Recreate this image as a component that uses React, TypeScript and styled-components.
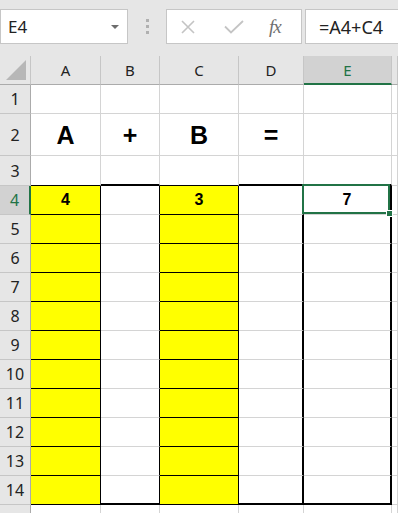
import styled, { createGlobalStyle } from 'styled-components'

const GREEN = '#217346'
const GRID = '1px solid #d4d4d4'
const THIN = '1px solid #000'
const THICK = '2px solid #000'

const GlobalStyle = createGlobalStyle`
  *, *::before, *::after { box-sizing: border-box; }
  html, body { margin: 0; padding: 0; }
  body {
    background: #e6e6e6;
    font-family: "Noto Sans", "Open Sans", sans-serif;
    overflow: hidden;
    width: 398px;
    height: 513px;
  }
`

const columns = ['A', 'B', 'C', 'D', 'E', 'F']
// the last row (15) only peeks in under row 14
const rowHeights = [29, 42, 30, 29, 29, 29, 29, 29, 29, 29, 29, 29, 29, 29, 29]

const bigText: Record<string, string> = { '2A': 'A', '2B': '+', '2C': 'B', '2D': '=' }
const values: Record<string, string> = { '4A': '4', '4C': '3', '4E': '7' }

type CellSpec = { bg: string; right: string; bottom: string }

function cellSpec(row: number, col: string): CellSpec {
  const inBlock = row >= 4 && row <= 14
  const yellow = inBlock && (col === 'A' || col === 'C')
  let right = GRID
  let bottom = GRID
  if (inBlock) {
    if (col === 'A' || col === 'B' || col === 'C') right = THIN
    if (col === 'D' || col === 'E') right = THICK
    if (col === 'A' || col === 'C') bottom = THIN
    if (row === 14 && (col === 'B' || col === 'D' || col === 'E')) bottom = THICK
  }
  if (row === 3) {
    if (col === 'A' || col === 'C') bottom = THIN
    if (col === 'B' || col === 'D' || col === 'E') bottom = THICK
  }
  return { bg: yellow ? '#ffff00' : '#ffffff', right, bottom }
}

function App() {
  return (
    <Page>
      <GlobalStyle />
      <FormulaBar>
        <NameBox>
          <NameText>E4</NameText>
          <DropArrow />
        </NameBox>
        <Grip>
          <span />
          <span />
          <span />
        </Grip>
        <FxBox>
          <svg width="14" height="14" viewBox="0 0 14 14">
            <path d="M1 1 L13 13 M13 1 L1 13" stroke="#c4c4c4" strokeWidth="1.6" fill="none" />
          </svg>
          <svg width="20" height="14" viewBox="0 0 20 14">
            <path d="M1 6.5 L7 12.5 L19 1" stroke="#c4c4c4" strokeWidth="1.8" fill="none" />
          </svg>
          <FxLabel>fx</FxLabel>
        </FxBox>
        <FormulaInput>=A4+C4</FormulaInput>
      </FormulaBar>

      <Sheet>
        <Corner>
          <svg width="21" height="21" viewBox="0 0 21 21">
            <polygon points="0,20 20,0 20,20" fill="#b7b7b7" />
          </svg>
        </Corner>
        {columns.map((c) => (
          <ColHeader key={c} $active={c === 'E'}>
            {c !== 'F' && c}
          </ColHeader>
        ))}
        {rowHeights.map((_, i) => {
          const row = i + 1
          return [
            <RowHeader key={`h${row}`} $active={row === 4}>
              {row < 15 && row}
            </RowHeader>,
            ...columns.map((c) => {
              const spec = cellSpec(row, c)
              const key = `${row}${c}`
              return (
                <Cell key={key} $bg={spec.bg} $right={spec.right} $bottom={spec.bottom}>
                  {bigText[key] && <BigText>{bigText[key]}</BigText>}
                  {values[key] && <ValueText>{values[key]}</ValueText>}
                  {key === '4E' && (
                    <Selection>
                      <FillHandle />
                    </Selection>
                  )}
                </Cell>
              )
            }),
          ]
        })}
      </Sheet>
    </Page>
  )
}

export default App

const Page = styled.div`
  width: 398px;
  height: 513px;
  overflow: hidden;
  display: flex;
  flex-direction: column;
  background: #e6e6e6;
`

const FormulaBar = styled.div`
  height: 56px;
  flex: none;
  display: flex;
  align-items: flex-start;
  padding-top: 9px;
`

const NameBox = styled.div`
  width: 128px;
  height: 35px;
  background: #fff;
  border: 1px solid #c6c6c6;
  display: flex;
  align-items: center;
  justify-content: space-between;
  padding: 0 8px 0 7px;
`

const NameText = styled.span`
  font-size: 17px;
  color: #222;
`

const DropArrow = styled.span`
  width: 0;
  height: 0;
  border-left: 4px solid transparent;
  border-right: 4px solid transparent;
  border-top: 4px solid #6d6d6d;
`

const Grip = styled.div`
  width: 38px;
  height: 35px;
  display: flex;
  flex-direction: column;
  align-items: center;
  justify-content: center;
  gap: 3px;

  span {
    width: 3px;
    height: 3px;
    background: #b0b0b0;
  }
`

const FxBox = styled.div`
  width: 136px;
  height: 35px;
  background: #fff;
  border: 1px solid #c6c6c6;
  display: flex;
  align-items: center;
  padding-left: 14px;

  svg:first-child {
    margin-right: 29px;
  }
  svg:nth-child(2) {
    margin-right: 25px;
  }
`

const FxLabel = styled.span`
  font-family: "Liberation Serif", serif;
  font-style: italic;
  font-size: 19px;
  color: #707070;
  letter-spacing: -1px;
`

const FormulaInput = styled.div`
  flex: 1;
  height: 35px;
  margin-left: 3px;
  background: #fff;
  border: 1px solid #c6c6c6;
  border-right: none;
  display: flex;
  align-items: center;
  padding-left: 13px;
  font-size: 18px;
  color: #222;
`

const Sheet = styled.div`
  flex: 1;
  display: grid;
  grid-template-columns: 31px 70px 59px 79px 65px 88px 1fr;
  grid-template-rows: 29px ${rowHeights.map((h) => `${h}px`).join(' ')};
  background: #fff;
`

const Corner = styled.div`
  background: #e6e6e6;
  border-right: 1px solid #c6c6c6;
  border-bottom: 1px solid #ababab;
  display: flex;
  align-items: flex-end;
  justify-content: flex-end;
  padding: 0 3px 3px 0;
`

const ColHeader = styled.div<{ $active: boolean }>`
  background: ${({ $active }) => ($active ? '#d2d2d2' : '#e6e6e6')};
  border-right: 1px solid #c6c6c6;
  border-bottom: ${({ $active }) => ($active ? `2px solid ${GREEN}` : '1px solid #ababab')};
  color: ${({ $active }) => ($active ? GREEN : '#222')};
  font-size: 15px;
  display: flex;
  align-items: center;
  justify-content: center;
  padding-top: ${({ $active }) => ($active ? '1px' : '0')};
`

const RowHeader = styled.div<{ $active: boolean }>`
  background: ${({ $active }) => ($active ? '#d2d2d2' : '#e6e6e6')};
  border-right: ${({ $active }) => ($active ? `2px solid ${GREEN}` : '1px solid #ababab')};
  border-bottom: 1px solid #c6c6c6;
  color: ${({ $active }) => ($active ? GREEN : '#222')};
  font-size: 16px;
  display: flex;
  align-items: center;
  justify-content: center;
  overflow: hidden;
`

const Cell = styled.div<{ $bg: string; $right: string; $bottom: string }>`
  position: relative;
  background: ${({ $bg }) => $bg};
  border-right: ${({ $right }) => $right};
  border-bottom: ${({ $bottom }) => $bottom};
  display: flex;
  align-items: center;
  justify-content: center;
  font-family: "Liberation Sans", Arial, sans-serif;
  font-weight: bold;
  color: #000;
`

const BigText = styled.span`
  font-size: 25px;
  margin-top: 2px;
`

const ValueText = styled.span`
  font-size: 16px;
`

const Selection = styled.div`
  position: absolute;
  left: -2px;
  top: -2px;
  right: 0;
  bottom: 0;
  border: 2px solid ${GREEN};
  z-index: 2;
`

const FillHandle = styled.div`
  position: absolute;
  right: -5px;
  bottom: -5px;
  width: 7px;
  height: 7px;
  background: ${GREEN};
  border: 1px solid #fff;
`
